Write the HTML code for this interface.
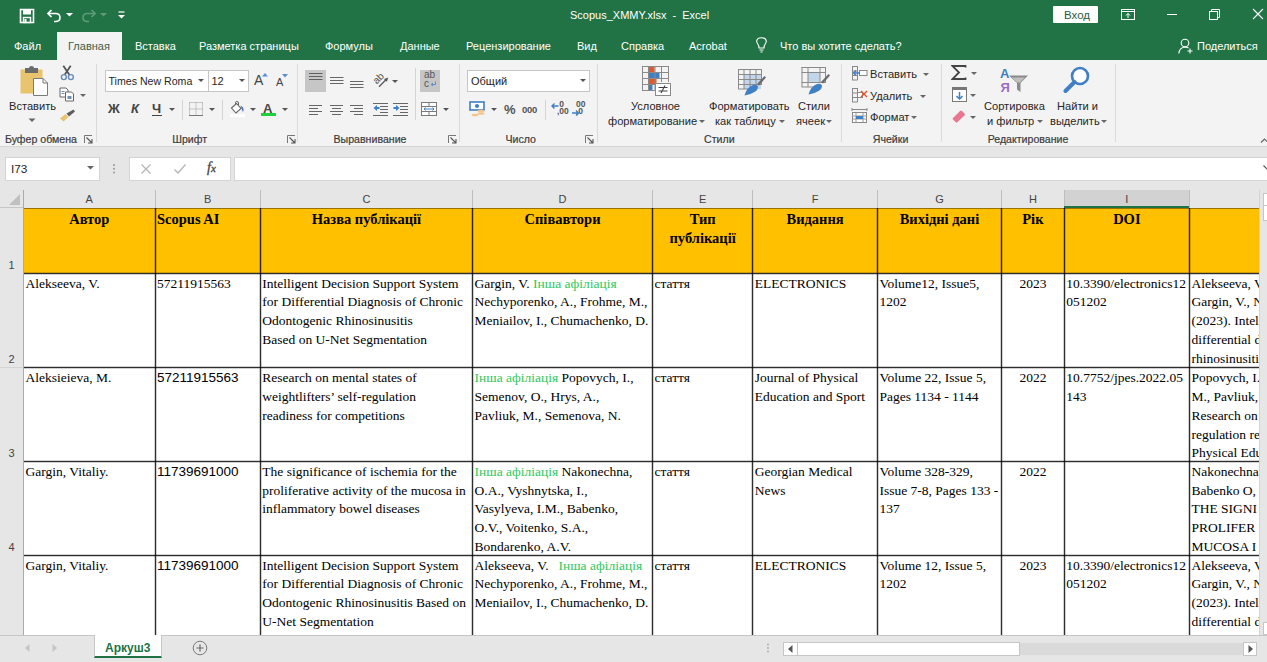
<!DOCTYPE html>
<html><head><meta charset="utf-8">
<style>
*{box-sizing:border-box;margin:0;padding:0}
html,body{width:1267px;height:662px;overflow:hidden;background:#e6e6e6}
body{position:relative;font-family:"Liberation Sans",sans-serif;font-size:11px;color:#444}
.a{position:absolute}
.t{position:absolute;white-space:nowrap}
#top{left:0;top:0;width:1267px;height:60px;background:#217346}
#rib{left:0;top:60px;width:1267px;height:87px;background:#f3f3f3;border-bottom:1px solid #d6d6d6}
.tab{position:absolute;top:39.5px;color:#fff;font-size:11px;white-space:nowrap}
.sep{position:absolute;top:64px;width:1px;height:78px;background:#dadada}
.glabel{position:absolute;top:132.5px;width:120px;text-align:center;font-size:10.6px;color:#3c3c3c;white-space:nowrap;-webkit-text-stroke:0.2px #3c3c3c}
/* grid */
#grid{left:0;top:190px;width:1267px;height:445px;background:#fff;overflow:hidden}
.ch{position:absolute;top:0;height:18px;background:#e6e6e6;font-size:11px;color:#444;text-align:center;line-height:19px}
.rh{position:absolute;left:0;width:23px;background:#e6e6e6;font-size:11px;color:#444;text-align:center}
.cell{position:absolute;font-family:"Liberation Serif",serif;font-size:13.5px;line-height:18.8px;color:#000;white-space:nowrap;overflow:hidden;padding:1.5px 0 0 2px}
.hd{font-weight:bold;font-size:14.5px;line-height:19.7px;text-align:center;padding-left:0}
.g{color:#2fc75e}
.sans{font-family:"Liberation Sans",sans-serif}
.vl{position:absolute;width:3px;background:linear-gradient(to right,rgba(0,0,0,.18) 0 1px,rgba(0,0,0,.82) 1px 2px,rgba(0,0,0,.18) 2px 3px)}
.hl{position:absolute;height:3px;background:linear-gradient(to bottom,rgba(0,0,0,.18) 0 1px,rgba(0,0,0,.82) 1px 2px,rgba(0,0,0,.18) 2px 3px)}
</style></head><body>
<!-- title bar + tabs -->
<div id="top" class="a"></div>
<div class="t" style="left:570px;top:9px;color:#fff;font-size:11px">Scopus_XMMY.xlsx&nbsp; - &nbsp;Excel</div>
<div class="a" style="left:1053px;top:6px;width:45px;height:17px;background:#fff;border-radius:1px"></div>
<div class="t" style="left:1064px;top:8.5px;color:#2a5a40;font-size:11.5px">Вход</div>

<svg class="a" style="left:19px;top:8px" width="16" height="16" viewBox="0 0 16 16"><path d="M1.5 1.5 H14.5 V14.5 H1.5 Z" fill="none" stroke="#fff" stroke-width="1.6"/><rect x="4" y="1.5" width="8" height="5" fill="#fff"/><rect x="4.5" y="9.5" width="7" height="5" fill="none" stroke="#fff" stroke-width="1.4"/><rect x="5.5" y="11" width="2" height="3" fill="#fff"/></svg>
<svg class="a" style="left:47px;top:9px" width="15" height="14" viewBox="0 0 15 14"><path d="M4.5 1 L1 4.5 L4.5 8" fill="none" stroke="#fff" stroke-width="1.6"/><path d="M1.5 4.5 H8.5 Q13 4.5 13 8.5 Q13 12.5 8.5 12.5 H7" fill="none" stroke="#fff" stroke-width="1.6"/></svg>
<svg class="a" style="left:66px;top:13px" width="7" height="4"><path d="M0 0 H7 L3.5 3.5 Z" fill="#fff"/></svg>
<svg class="a" style="left:81px;top:9px" width="15" height="14" viewBox="0 0 15 14"><path d="M10.5 1 L14 4.5 L10.5 8" fill="none" stroke="#5e9c79" stroke-width="1.6"/><path d="M13.5 4.5 H6.5 Q2 4.5 2 8.5 Q2 12.5 6.5 12.5 H8" fill="none" stroke="#5e9c79" stroke-width="1.6"/></svg>
<svg class="a" style="left:100px;top:13px" width="7" height="4"><path d="M0 0 H7 L3.5 3.5 Z" fill="#5e9c79"/></svg>
<svg class="a" style="left:118px;top:11px" width="7" height="9"><path d="M0.5 1 H6.5" stroke="#fff" stroke-width="1.2"/><path d="M0 4 H7 L3.5 7.5 Z" fill="#fff"/></svg>
<svg class="a" style="left:1121px;top:9px" width="14" height="11" viewBox="0 0 14 11"><rect x="0.5" y="0.5" width="13" height="10" fill="none" stroke="#fff"/><path d="M0.5 2.5 H13.5" stroke="#fff"/><path d="M7 9 V4.5 M5 6.5 L7 4.5 L9 6.5" stroke="#fff" fill="none"/></svg>
<div class="a" style="left:1167px;top:14px;width:10px;height:1px;background:#fff"></div>
<svg class="a" style="left:1209px;top:9px" width="12" height="11" viewBox="0 0 12 11"><rect x="0.5" y="2.5" width="8" height="8" fill="none" stroke="#fff"/><path d="M2.5 2.5 V0.5 H10.5 V8.5 H8.5" fill="none" stroke="#fff"/></svg>
<svg class="a" style="left:1252px;top:8px" width="12" height="12" viewBox="0 0 12 12"><path d="M1 1 L11 11 M11 1 L1 11" stroke="#fff" stroke-width="1.1"/></svg>
<svg class="a" style="left:756px;top:37px" width="11" height="16" viewBox="0 0 11 16"><path d="M3 11 Q3 8.5 1.5 6.5 Q0.5 5 0.8 3.5 Q1.5 0.8 5.5 0.8 Q9.5 0.8 10.2 3.5 Q10.5 5 9.5 6.5 Q8 8.5 8 11 Z" fill="none" stroke="#fff" stroke-width="1.1"/><path d="M3.5 13 H7.5 M4.5 15 H6.5" stroke="#fff" stroke-width="1.1"/></svg>
<svg class="a" style="left:1178px;top:38px" width="16" height="16" viewBox="0 0 16 16"><circle cx="7" cy="5" r="3.8" fill="none" stroke="#fff" stroke-width="1.1"/><path d="M0.8 15.5 Q1.5 9.5 7 9 Q9 9 10.5 10" fill="none" stroke="#fff" stroke-width="1.1"/><path d="M12 10.5 V15.5 M9.5 13 H14.5" stroke="#fff" stroke-width="1.1"/></svg>
<div class="a" style="left:57px;top:32px;width:65px;height:28px;background:#f3f3f3"></div>
<div class="tab" style="left:14px">Файл</div>
<div class="tab" style="left:68px;color:#3b5e4a">Главная</div>
<div class="tab" style="left:135px">Вставка</div>
<div class="tab" style="left:199px">Разметка страницы</div>
<div class="tab" style="left:325px">Формулы</div>
<div class="tab" style="left:400px">Данные</div>
<div class="tab" style="left:466px">Рецензирование</div>
<div class="tab" style="left:577px">Вид</div>
<div class="tab" style="left:621px">Справка</div>
<div class="tab" style="left:689px">Acrobat</div>
<div class="tab" style="left:780px">Что вы хотите сделать?</div>
<div class="tab" style="left:1197px">Поделиться</div>

<!-- ribbon -->
<div id="rib" class="a"></div>
<div class="glabel" style="left:-19.1px">Буфер обмена</div>
<div class="glabel" style="left:129.7px">Шрифт</div>
<div class="glabel" style="left:310.0px">Выравнивание</div>
<div class="glabel" style="left:460.7px">Число</div>
<div class="glabel" style="left:659.3px">Стили</div>
<div class="glabel" style="left:830.6px">Ячейки</div>
<div class="glabel" style="left:968.0px">Редактирование</div>
<div class="sep" style="left:96px"></div>
<div class="sep" style="left:297px"></div>
<div class="sep" style="left:459px"></div>
<div class="sep" style="left:597px"></div>
<div class="sep" style="left:841px"></div>
<div class="sep" style="left:941px"></div>
<div class="sep" style="left:1115px"></div>
<!-- clipboard group -->
<svg class="a" style="left:18px;top:65px" width="32" height="32" viewBox="0 0 32 32">
 <rect x="2.5" y="4.5" width="22" height="24" fill="#e8c46f"/>
 <path d="M7 3 H11 Q11 1 13.5 1 Q16 1 16 3 H20 V8 H7 Z" fill="#6b6b6b"/>
 <path d="M15.5 13.5 H25 L29.5 18 V30.5 H15.5 Z" fill="#fff" stroke="#7a7a7a" stroke-width="1"/>
 <path d="M25 13.5 V18 H29.5" fill="none" stroke="#7a7a7a" stroke-width="1"/>
</svg>
<div class="t" style="left:9px;top:100px;font-size:11.1px;color:#262626">Вставить</div>
<svg class="a" style="left:28px;top:118px" width="8" height="5"><path d="M0.5 0.5 H7.5 L4 4 Z" fill="#666"/></svg>
<svg class="a" style="left:59px;top:65px" width="16" height="16" viewBox="0 0 16 16"><path d="M4.3 0.8 L10.5 10 M11.7 0.8 L5.5 10" stroke="#555" stroke-width="1.8" fill="none"/><circle cx="4.9" cy="12.1" r="2.5" fill="none" stroke="#6b8cb5" stroke-width="1.4"/><circle cx="11.9" cy="12.1" r="2.5" fill="none" stroke="#6b8cb5" stroke-width="1.4"/></svg>
<svg class="a" style="left:59px;top:87px" width="16" height="15" viewBox="0 0 16 15">
 <path d="M1 1 H7 L9 3 V10 H1 Z" fill="#fff" stroke="#666" stroke-width="1"/>
 <path d="M6.5 5 H12.5 L14.5 7 V14 H6.5 Z" fill="#fff" stroke="#666" stroke-width="1"/>
 <rect x="2.5" y="4" width="3" height="1" fill="#6f8fb8"/><rect x="2.5" y="6" width="3" height="1" fill="#6f8fb8"/><rect x="8.5" y="9" width="4" height="3" fill="#6f8fb8"/>
</svg>
<svg class="a" style="left:80px;top:94px" width="6" height="4"><path d="M0 0 H6 L3 3 Z" fill="#666"/></svg>
<svg class="a" style="left:59px;top:109px" width="17" height="13" viewBox="0 0 17 13"><path d="M1 9.5 L6.5 5 L9.5 8 L4.5 12.5 Z" fill="#e8c46f"/><path d="M7.5 4.5 L14.5 0.5 L16 2.5 L10 7.5 Z" fill="#5f5f5f"/></svg>
<svg class="a" style="left:84px;top:135px" width="9" height="9" viewBox="0 0 9 9"><path d="M0.5 8 V0.5 H8" fill="none" stroke="#777" stroke-width="1"/><path d="M2.5 2.5 L7.5 7.5 M8 4 V8 H4" stroke="#555" fill="none" stroke-width="1.1"/></svg>
<!-- alignment group -->
<div class="a" style="left:305px;top:70px;width:21px;height:22px;background:#c6c6c6"></div>
<svg class="a" style="left:309px;top:72px" width="14" height="9"><path d="M0 1.5H13.5M0 4.5H13.5M0 7.5H13.5" stroke="#5f5f5f" stroke-width="1"/></svg>
<svg class="a" style="left:330px;top:76px" width="14" height="9"><path d="M0 1.5H13.5M0 4.5H13.5M0 7.5H13.5" stroke="#666" stroke-width="1"/></svg>
<svg class="a" style="left:350px;top:80px" width="14" height="9"><path d="M0 1.5H13.5M0 4.5H13.5M0 7.5H13.5" stroke="#666" stroke-width="1"/></svg>
<svg class="a" style="left:372px;top:71px" width="22" height="18" viewBox="0 0 22 18"><text x="0" y="0" transform="translate(4.8 13.6) rotate(-45)" font-family="Liberation Sans" font-size="10" fill="#505050">ab</text><path d="M7 15.8 L14 8.8" stroke="#555" stroke-width="1.3" fill="none"/><path d="M16.3 6.5 L12 8 L14.8 10.8 Z" fill="#555"/></svg>
<svg class="a" style="left:392px;top:80px" width="6" height="4"><path d="M0 0 H6 L3 3 Z" fill="#555"/></svg>
<svg class="a" style="left:309px;top:104px" width="14" height="11"><path d="M0 1.5H13M0 4.5H9M0 7.5H13M0 10.5H9" stroke="#666" stroke-width="1"/></svg>
<svg class="a" style="left:330px;top:104px" width="14" height="11"><path d="M0 1.5H13M2 4.5H11M0 7.5H13M2 10.5H11" stroke="#666" stroke-width="1"/></svg>
<svg class="a" style="left:350px;top:104px" width="14" height="11"><path d="M0 1.5H13M4 4.5H13M0 7.5H13M4 10.5H13" stroke="#666" stroke-width="1"/></svg>
<svg class="a" style="left:373px;top:102px" width="16" height="14"><path d="M0 1.5H15M7 4.5H15M7 7.5H15M7 10.5H15M0 13.5H15" stroke="#666" stroke-width="1"/><path d="M0.5 6 L4 3 V5 H6.5 V7 H4 V9 Z" fill="#3f7fc6"/></svg>
<svg class="a" style="left:393px;top:102px" width="16" height="14"><path d="M0 1.5H15M7 4.5H15M7 7.5H15M7 10.5H15M0 13.5H15" stroke="#666" stroke-width="1"/><path d="M6.5 6 L3 3 V5 H0.5 V7 H3 V9 Z" fill="#3f7fc6"/></svg>
<div class="a" style="left:415px;top:68px;width:1px;height:52px;background:#d4d4d4"></div>
<div class="a" style="left:420px;top:70px;width:20px;height:22px;background:#c6c6c6"></div>
<div class="t" style="left:424px;top:70px;font-size:10px;line-height:9px;color:#555">ab<br>c</div>
<svg class="a" style="left:430px;top:81px" width="7" height="6"><path d="M5.5 0.5 V3.5 H1.5 M3 2 L1 3.5 L3 5" stroke="#5b8fd0" fill="none" stroke-width="1"/></svg>
<svg class="a" style="left:421px;top:102px" width="16" height="14" viewBox="0 0 16 14"><rect x="0.5" y="0.5" width="15" height="13" fill="#fff" stroke="#7a7a7a"/><path d="M0.5 4.5H15.5M0.5 9.5H15.5M8 0.5V4.5M8 9.5V13.5" stroke="#7a7a7a" fill="none"/><path d="M3 7H13M4.5 5.5L3 7L4.5 8.5M11.5 5.5L13 7L11.5 8.5" stroke="#3f7fc6" fill="none"/></svg>
<svg class="a" style="left:443px;top:108px" width="6" height="4"><path d="M0 0 H6 L3 3 Z" fill="#555"/></svg>
<svg class="a" style="left:448px;top:135px" width="9" height="9" viewBox="0 0 9 9"><path d="M0.5 8 V0.5 H8" fill="none" stroke="#777" stroke-width="1"/><path d="M2.5 2.5 L7.5 7.5 M8 4 V8 H4" stroke="#555" fill="none" stroke-width="1.1"/></svg>
<!-- number group -->
<div class="a" style="left:467px;top:70px;width:123px;height:22px;background:#fff;border:1px solid #c6c6c6"></div>
<div class="t" style="left:471px;top:75px;font-size:11px;color:#262626">Общий</div>
<svg class="a" style="left:580px;top:79px" width="6" height="4"><path d="M0 0 H6 L3 3 Z" fill="#555"/></svg>
<svg class="a" style="left:469px;top:101px" width="17" height="16" viewBox="0 0 17 16"><rect x="1" y="1" width="14" height="8" fill="#fff" stroke="#3f7fc6" stroke-width="1.6"/><circle cx="8" cy="5" r="2" fill="#3f7fc6"/><ellipse cx="12" cy="10" rx="3.5" ry="1.3" fill="#f3c58a"/><ellipse cx="12" cy="12.5" rx="3.5" ry="1.3" fill="#f3c58a"/><ellipse cx="6" cy="14" rx="3.5" ry="1.3" fill="#f3c58a"/></svg>
<svg class="a" style="left:491px;top:108px" width="6" height="4"><path d="M0 0 H6 L3 3 Z" fill="#555"/></svg>
<div class="t" style="left:504px;top:102px;font-size:13px;font-weight:bold;color:#555">%</div>
<div class="t" style="left:522px;top:104px;font-size:9.5px;font-weight:bold;color:#555;letter-spacing:-0.3px">000</div>
<div class="a" style="left:545px;top:100px;width:1px;height:20px;background:#d4d4d4"></div>
<div class="t" style="left:557px;top:101px;font-size:8.5px;line-height:7px;color:#555;font-weight:bold">&nbsp;0<br>,00</div>
<svg class="a" style="left:551px;top:103px" width="8" height="6"><path d="M7.5 3 H1 M3.5 0.5 L1 3 L3.5 5.5" stroke="#3f7fc6" stroke-width="1.4" fill="none"/></svg>
<div class="t" style="left:576px;top:101px;font-size:8.5px;line-height:7px;color:#555;font-weight:bold">00<br>,0</div>
<svg class="a" style="left:572px;top:110px" width="8" height="6"><path d="M0 3 H6.5 M4 0.5 L6.5 3 L4 5.5" stroke="#3f7fc6" stroke-width="1.4" fill="none"/></svg>
<svg class="a" style="left:585px;top:135px" width="9" height="9" viewBox="0 0 9 9"><path d="M0.5 8 V0.5 H8" fill="none" stroke="#777" stroke-width="1"/><path d="M2.5 2.5 L7.5 7.5 M8 4 V8 H4" stroke="#555" fill="none" stroke-width="1.1"/></svg>
<!-- styles group -->
<svg class="a" style="left:641px;top:66px" width="32" height="31" viewBox="0 0 32 31">
 <rect x="7.5" y="1" width="6" height="5" fill="#e25a2b"/><rect x="7.5" y="7" width="11" height="5" fill="#3f7fc6"/><rect x="7.5" y="13" width="8" height="5" fill="#e25a2b"/><rect x="7.5" y="19" width="4" height="5" fill="#3f7fc6"/>
 <path d="M1.5 0.5 V24.5 M7.5 0.5 V24.5 M14 0.5 V24.5 M20.5 0.5 V16 M27.5 0.5 V16 M1 0.5 H28 M1 6.5 H28 M1 12.5 H28 M1 18.5 H14 M1 24.5 H14" stroke="#8a8a8a" stroke-width="1" fill="none"/>
 <rect x="14.5" y="17.5" width="15" height="12" fill="#fff" stroke="#8a8a8a"/>
 <path d="M17.5 21.5 H26.5 M17.5 25 H26.5 M24 19.5 L20 27" stroke="#444" stroke-width="1.1"/>
</svg>
<div class="t" style="left:631px;top:100px;font-size:11.1px;color:#262626">Условное</div>
<div class="t" style="left:608px;top:115px;font-size:11.1px;color:#262626">форматирование</div>
<svg class="a" style="left:699px;top:120px" width="6" height="4"><path d="M0 0 H6 L3 3 Z" fill="#666"/></svg>
<svg class="a" style="left:737px;top:68px" width="30" height="29" viewBox="0 0 30 29">
 <rect x="7" y="6" width="17" height="15" fill="#c3d5ea"/>
 <path d="M1.5 1 V21 M7 1 V21 M13 1 V21 M19 1 V21 M24.5 1 V16 M1 1.5 H25 M1 6.5 H25 M1 11.5 H25 M1 16.5 H25 M1 21 H15" stroke="#8a8a8a" stroke-width="1" fill="none"/>
 <path d="M20 16 L27.5 8 L29 9.5 L22 17.5 Z" fill="#6b6b6b"/>
 <path d="M7.5 27.5 Q10 19 16 17 Q20 16 21 18.5 Q21 22 17.5 24 Q13 27 7.5 27.5 Z" fill="#3f7fc6"/>
</svg>
<div class="t" style="left:709px;top:100px;font-size:11.1px;color:#262626">Форматировать</div>
<div class="t" style="left:715px;top:115px;font-size:11.1px;color:#262626">как таблицу</div>
<svg class="a" style="left:779px;top:120px" width="6" height="4"><path d="M0 0 H6 L3 3 Z" fill="#666"/></svg>
<svg class="a" style="left:801px;top:66px" width="30" height="30" viewBox="0 0 30 30">
 <rect x="7" y="6.5" width="12" height="10" fill="#c3d5ea"/>
 <path d="M1 1 V21 M7 1 V21 M19 1 V16 M24.5 1 V16 M0.5 1.5 H25 M0.5 6.5 H25 M0.5 16.5 H25 M0.5 21 H14" stroke="#8a8a8a" stroke-width="1" fill="none"/>
 <path d="M20 16 L27.5 8 L29 9.5 L22 17.5 Z" fill="#6b6b6b"/>
 <path d="M7.5 28.5 Q10 20 16 18 Q20 17 21 19.5 Q21 23 17.5 25 Q13 28 7.5 28.5 Z" fill="#3f7fc6"/>
</svg>
<div class="t" style="left:798px;top:100px;font-size:11.1px;color:#262626">Стили</div>
<div class="t" style="left:796px;top:115px;font-size:11.1px;color:#262626">ячеек</div>
<svg class="a" style="left:826px;top:120px" width="6" height="4"><path d="M0 0 H6 L3 3 Z" fill="#666"/></svg>
<!-- cells group -->
<svg class="a" style="left:851px;top:65px" width="17" height="16" viewBox="0 0 17 16"><path d="M1.5 1 V15 M6.5 1 V15 M1 1.5 H6.5 M1 6 H6.5 M1 10.5 H6.5 M1 15 H6.5" stroke="#888" fill="none"/><rect x="8.5" y="5.5" width="7.5" height="5" fill="#fff" stroke="#888"/><path d="M2.5 8 H9 M5 5.5 L2.5 8 L5 10.5" stroke="#3f7fc6" stroke-width="1.4" fill="none"/></svg>
<div class="t" style="left:870px;top:68px;font-size:11.1px;color:#262626">Вставить</div>
<svg class="a" style="left:923px;top:73px" width="6" height="4"><path d="M0 0 H6 L3 3 Z" fill="#666"/></svg>
<svg class="a" style="left:851px;top:87px" width="17" height="16" viewBox="0 0 17 16"><path d="M1.5 1 V15 M6.5 1 V15 M1 1.5 H6.5 M1 6 H6.5 M1 10.5 H6.5 M1 15 H6.5" stroke="#888" fill="none"/><rect x="6.5" y="5.5" width="5" height="5" fill="#fff" stroke="#888"/><path d="M10 4 L16 10 M16 4 L10 10" stroke="#e0522a" stroke-width="1.4"/></svg>
<div class="t" style="left:870px;top:90px;font-size:11.1px;color:#262626">Удалить</div>
<svg class="a" style="left:920px;top:95px" width="6" height="4"><path d="M0 0 H6 L3 3 Z" fill="#666"/></svg>
<svg class="a" style="left:851px;top:108px" width="17" height="16" viewBox="0 0 17 16"><path d="M1 1.5 H16 M1 0 V3 M16 0 V3" stroke="#888" fill="none"/><rect x="1.5" y="4.5" width="14" height="10" fill="#fff" stroke="#888"/><path d="M1.5 8 H15.5 M1.5 11 H15.5 M5 4.5 V14.5 M12 4.5 V14.5" stroke="#999" fill="none"/><rect x="5" y="8" width="7" height="3" fill="#3f7fc6"/></svg>
<div class="t" style="left:870px;top:111px;font-size:11.1px;color:#262626">Формат</div>
<svg class="a" style="left:911px;top:116px" width="6" height="4"><path d="M0 0 H6 L3 3 Z" fill="#666"/></svg>
<!-- editing group -->
<svg class="a" style="left:951px;top:65px" width="16" height="15" viewBox="0 0 16 15"><path d="M14.5 2.5 V1 H1.5 L8 7.5 L1.5 14 H14.5 V12.5" stroke="#444" stroke-width="1.8" fill="none"/></svg>
<svg class="a" style="left:971px;top:72px" width="6" height="4"><path d="M0 0 H6 L3 3 Z" fill="#666"/></svg>
<svg class="a" style="left:952px;top:87px" width="15" height="15" viewBox="0 0 15 15"><rect x="0.5" y="0.5" width="14" height="14" fill="#fff" stroke="#777"/><rect x="0.5" y="0.5" width="14" height="2.5" fill="#777"/><path d="M7.5 5 V12 M4.5 9 L7.5 12 L10.5 9" stroke="#3f7fc6" stroke-width="1.5" fill="none"/></svg>
<svg class="a" style="left:970px;top:94px" width="6" height="4"><path d="M0 0 H6 L3 3 Z" fill="#666"/></svg>
<svg class="a" style="left:952px;top:109px" width="14" height="14" viewBox="0 0 14 14"><path d="M1 9 L8 2 Q9 1 10 2 L12.5 4.5 Q13.5 5.5 12.5 6.5 L5.5 13 Q4.5 14 3.5 13 L1 10.5 Q0 9.5 1 9 Z" fill="#e8788e"/></svg>
<svg class="a" style="left:970px;top:116px" width="6" height="4"><path d="M0 0 H6 L3 3 Z" fill="#666"/></svg>
<svg class="a" style="left:998px;top:66px" width="32" height="28" viewBox="0 0 32 28">
 <text x="2" y="12" font-family="Liberation Sans" font-weight="bold" font-size="13" fill="#3f7fc6">A</text>
 <text x="2.5" y="26" font-family="Liberation Sans" font-weight="bold" font-size="13" fill="#9b6bbf">Я</text>
 <path d="M11 9.5 H30 L22.5 17 V26 L19 23.5 V17 Z" fill="#8a8a8a"/>
 <path d="M14 11.5 H27 L22 16.5 H19 Z" fill="#f3f3f3" opacity="0.5"/>
</svg>
<div class="t" style="left:984px;top:100px;font-size:11.1px;color:#262626">Сортировка</div>
<div class="t" style="left:987px;top:115px;font-size:11.1px;color:#262626">и фильтр</div>
<svg class="a" style="left:1037px;top:120px" width="6" height="4"><path d="M0 0 H6 L3 3 Z" fill="#666"/></svg>
<svg class="a" style="left:1063px;top:66px" width="28" height="27" viewBox="0 0 28 27"><circle cx="17" cy="10" r="8" fill="#fff" stroke="#3f7fc6" stroke-width="2.6"/><path d="M11.5 16 L2.5 25" stroke="#3f7fc6" stroke-width="4" stroke-linecap="round"/></svg>
<div class="t" style="left:1057px;top:100px;font-size:11.1px;color:#262626">Найти и</div>
<div class="t" style="left:1050px;top:115px;font-size:11.1px;color:#262626">выделить</div>
<svg class="a" style="left:1101px;top:120px" width="6" height="4"><path d="M0 0 H6 L3 3 Z" fill="#666"/></svg>
<svg class="a" style="left:1260px;top:135px" width="9" height="9"><path d="M1 7.5 L4.5 4 L8 7.5" stroke="#666" fill="none" stroke-width="1.2"/></svg>
<!-- font group -->
<div class="a" style="left:105px;top:70px;width:104px;height:22px;background:#fff;border:1px solid #c6c6c6"></div>
<div class="t" style="left:108.5px;top:75px;font-size:10.6px;color:#262626">Times New Roma</div>
<svg class="a" style="left:198px;top:79px" width="6" height="4"><path d="M0 0 H6 L3 3 Z" fill="#555"/></svg>
<div class="a" style="left:208px;top:70px;width:41px;height:22px;background:#fff;border:1px solid #c6c6c6"></div>
<div class="t" style="left:211.5px;top:75px;font-size:11px;color:#262626">12</div>
<svg class="a" style="left:239px;top:79px" width="6" height="4"><path d="M0 0 H6 L3 3 Z" fill="#555"/></svg>
<div class="t" style="left:254px;top:72px;font-size:14px;color:#444">A</div>
<svg class="a" style="left:262px;top:73px" width="6" height="4"><path d="M0 3.5 H6 L3 0 Z" fill="#5b8fd0"/></svg>
<div class="t" style="left:276px;top:76px;font-size:11px;color:#444">A</div>
<svg class="a" style="left:282px;top:74px" width="6" height="4"><path d="M0 0 H6 L3 3.5 Z" fill="#5b8fd0"/></svg>
<div class="t" style="left:108px;top:101px;font-size:13px;font-weight:bold;color:#444">Ж</div>
<div class="t" style="left:131px;top:101px;font-size:13px;font-weight:bold;font-style:italic;color:#444">К</div>
<div class="t" style="left:152px;top:101px;font-size:13px;font-weight:bold;color:#444">Ч</div>
<div class="a" style="left:152px;top:115px;width:10px;height:1px;background:#444"></div>
<svg class="a" style="left:169px;top:108px" width="6" height="4"><path d="M0 0 H6 L3 3 Z" fill="#555"/></svg>
<div class="a" style="left:182px;top:100px;width:1px;height:20px;background:#d4d4d4"></div>
<svg class="a" style="left:189px;top:102px" width="14" height="14" viewBox="0 0 14 14"><path d="M0.5 0.5 H13.5 M0.5 7 H13.5 M0.5 0.5 V13.5 M13.5 0.5 V13.5 M7 0.5 V13.5" stroke="#9a9a9a" stroke-dasharray="1 1" fill="none"/><path d="M0 13.5 H14" stroke="#777"/></svg>
<svg class="a" style="left:209px;top:108px" width="6" height="4"><path d="M0 0 H6 L3 3 Z" fill="#555"/></svg>
<div class="a" style="left:222px;top:100px;width:1px;height:20px;background:#d4d4d4"></div>
<svg class="a" style="left:230px;top:101px" width="16" height="16" viewBox="0 0 16 16"><path d="M5.5 6 V1.5 Q5.5 0.5 7 0.5 Q8.5 0.5 8.5 2 V4" stroke="#666" stroke-width="1" fill="none"/><path d="M1.5 7 L6.5 2.5 L11 7.5 L6 12 Z" fill="#fff" stroke="#666" stroke-width="1.1"/><path d="M10.5 4.5 Q14 6 13.5 9.5 L12.8 11 L11.5 7.5 Z" fill="#4a74b8"/><rect x="0" y="13" width="15" height="3" fill="#fff"/></svg>
<svg class="a" style="left:250px;top:108px" width="6" height="4"><path d="M0 0 H6 L3 3 Z" fill="#555"/></svg>
<div class="t" style="left:263px;top:101px;font-size:13px;font-weight:bold;color:#4a4a4a">A</div>
<div class="a" style="left:261px;top:113px;width:15px;height:3px;background:#1ed13c"></div>
<svg class="a" style="left:282px;top:108px" width="6" height="4"><path d="M0 0 H6 L3 3 Z" fill="#555"/></svg>
<svg class="a" style="left:287px;top:135px" width="9" height="9" viewBox="0 0 9 9"><path d="M0.5 8 V0.5 H8" fill="none" stroke="#777" stroke-width="1"/><path d="M2.5 2.5 L7.5 7.5 M8 4 V8 H4" stroke="#555" fill="none" stroke-width="1.1"/></svg>

<!-- formula bar -->
<div class="a" style="left:5px;top:157px;width:95px;height:24px;background:#fff;border:1px solid #d4d4d4"></div>
<div class="t" style="left:11px;top:162px;font-size:11.8px;color:#262626">I73</div>
<div class="a" style="left:129px;top:157px;width:102px;height:24px;background:#fff;border:1px solid #d4d4d4"></div>
<div class="a" style="left:234px;top:157px;width:1040px;height:24px;background:#fff;border:1px solid #d4d4d4"></div>
<svg class="a" style="left:87px;top:166px" width="7" height="4"><path d="M0 0 H7 L3.5 3.5 Z" fill="#666"/></svg>
<svg class="a" style="left:112px;top:163px" width="4" height="12"><circle cx="2" cy="2" r="1" fill="#999"/><circle cx="2" cy="5.8" r="1" fill="#999"/><circle cx="2" cy="9.5" r="1" fill="#999"/></svg>
<svg class="a" style="left:141px;top:164px" width="10" height="10"><path d="M0.5 0.5 L9.5 9.5 M9.5 0.5 L0.5 9.5" stroke="#b4b4b4" stroke-width="1.1"/></svg>
<svg class="a" style="left:174px;top:164px" width="12" height="10"><path d="M0.5 5.5 L4 9 L11.5 0.5" stroke="#b4b4b4" stroke-width="1.3" fill="none"/></svg>
<div class="t" style="left:207px;top:160px;font-family:'Liberation Serif',serif;font-style:italic;font-size:14px;color:#444;-webkit-text-stroke:0.3px #444">f<span style="font-size:11px">x</span></div>
<svg class="a" style="left:1263px;top:165px" width="8" height="6"><path d="M0.5 0.5 L4 4 L7.5 0.5" stroke="#555" stroke-width="1.2" fill="none"/></svg>

<!-- grid -->
<div id="grid" class="a"></div>
<div class="a" style="left:23.5px;top:208px;width:1235.8px;height:65px;background:#ffc000"></div>
<div class="ch" style="left:23.5px;width:131.5px;top:190px;height:18px;background:#e6e6e6">A</div>
<div class="ch" style="left:155px;width:105.3px;top:190px;height:18px;background:#e6e6e6">B</div>
<div class="a" style="left:154.5px;top:190px;width:1px;height:18px;background:#bdbdbd"></div>
<div class="ch" style="left:260.3px;width:212.3px;top:190px;height:18px;background:#e6e6e6">C</div>
<div class="a" style="left:259.8px;top:190px;width:1px;height:18px;background:#bdbdbd"></div>
<div class="ch" style="left:472.6px;width:179.9px;top:190px;height:18px;background:#e6e6e6">D</div>
<div class="a" style="left:472.1px;top:190px;width:1px;height:18px;background:#bdbdbd"></div>
<div class="ch" style="left:652.5px;width:100.3px;top:190px;height:18px;background:#e6e6e6">E</div>
<div class="a" style="left:652px;top:190px;width:1px;height:18px;background:#bdbdbd"></div>
<div class="ch" style="left:752.8px;width:124.6px;top:190px;height:18px;background:#e6e6e6">F</div>
<div class="a" style="left:752.3px;top:190px;width:1px;height:18px;background:#bdbdbd"></div>
<div class="ch" style="left:877.4px;width:124.1px;top:190px;height:18px;background:#e6e6e6">G</div>
<div class="a" style="left:876.9px;top:190px;width:1px;height:18px;background:#bdbdbd"></div>
<div class="ch" style="left:1001.5px;width:62.8px;top:190px;height:18px;background:#e6e6e6">H</div>
<div class="a" style="left:1001px;top:190px;width:1px;height:18px;background:#bdbdbd"></div>
<div class="ch" style="left:1064.3px;width:125.1px;top:190px;height:18px;background:#d2d2d2">I</div>
<div class="a" style="left:1063.8px;top:190px;width:1px;height:18px;background:#bdbdbd"></div>
<div class="ch" style="left:1189.4px;width:69.9px;top:190px;height:18px;background:#e6e6e6"></div>
<div class="a" style="left:1188.9px;top:190px;width:1px;height:18px;background:#bdbdbd"></div>
<div class="a" style="left:23.5px;top:208px;width:1235.8px;height:1px;background:rgba(0,0,0,.4)"></div>
<div class="a" style="left:1064.3px;top:206px;width:125.1px;height:2px;background:#217346"></div>
<div class="a" style="left:1259.3px;top:190px;width:7.7000000000000455px;height:445px;background:#e6e6e6"></div>
<div class="a" style="left:0;top:190px;width:23.5px;height:18px;background:#e6e6e6"></div>
<svg class="a" style="left:9px;top:194px" width="12" height="12"><path d="M11 0 L11 11 L0 11 Z" fill="#c0c0c0"/></svg>
<div class="a" style="left:23px;top:190px;width:1px;height:445px;background:#ababab"></div>
<div class="a" style="left:0;top:207px;width:23px;height:1px;background:#c6c6c6"></div>
<div class="rh" style="top:208px;height:65px"></div>
<div class="t" style="left:0;width:23px;text-align:center;top:258.5px;font-size:11px;color:#444">1</div>
<div class="a" style="left:0;top:272.5px;width:23px;height:1px;background:#d4d4d4"></div>
<div class="rh" style="top:273px;height:94.7px"></div>
<div class="t" style="left:0;width:23px;text-align:center;top:353.2px;font-size:11px;color:#444">2</div>
<div class="a" style="left:0;top:367.2px;width:23px;height:1px;background:#d4d4d4"></div>
<div class="rh" style="top:367.7px;height:93.6px"></div>
<div class="t" style="left:0;width:23px;text-align:center;top:446.8px;font-size:11px;color:#444">3</div>
<div class="a" style="left:0;top:460.8px;width:23px;height:1px;background:#d4d4d4"></div>
<div class="rh" style="top:461.3px;height:93.7px"></div>
<div class="t" style="left:0;width:23px;text-align:center;top:540.5px;font-size:11px;color:#444">4</div>
<div class="a" style="left:0;top:554.5px;width:23px;height:1px;background:#d4d4d4"></div>
<div class="rh" style="top:555px;height:80px"></div>
<div class="cell hd" style="left:23.5px;top:208px;width:131.5px;height:65px;text-align:center;padding-left:0;">Автор</div>
<div class="cell hd" style="left:155px;top:208px;width:105.3px;height:65px;text-align:left;padding-left:2px;">Scopus AI</div>
<div class="cell hd" style="left:260.3px;top:208px;width:212.3px;height:65px;text-align:center;padding-left:0;">Назва публікації</div>
<div class="cell hd" style="left:472.6px;top:208px;width:179.9px;height:65px;text-align:center;padding-left:0;">Співавтори</div>
<div class="cell hd" style="left:652.5px;top:208px;width:100.3px;height:65px;text-align:center;padding-left:0;">Тип<br>публікації</div>
<div class="cell hd" style="left:752.8px;top:208px;width:124.6px;height:65px;text-align:center;padding-left:0;">Видання</div>
<div class="cell hd" style="left:877.4px;top:208px;width:124.1px;height:65px;text-align:center;padding-left:0;">Вихідні дані</div>
<div class="cell hd" style="left:1001.5px;top:208px;width:62.8px;height:65px;text-align:center;padding-left:0;">Рік</div>
<div class="cell hd" style="left:1064.3px;top:208px;width:125.1px;height:65px;text-align:center;padding-left:0;">DOI</div>
<div class="cell" style="left:23.5px;top:273px;width:131.5px;height:94.7px;">Alekseeva, V.</div>
<div class="cell" style="left:155px;top:273px;width:105.3px;height:94.7px;">57211915563</div>
<div class="cell" style="left:260.3px;top:273px;width:212.3px;height:94.7px;">Intelligent Decision Support System<br>for Differential Diagnosis of Chronic<br>Odontogenic Rhinosinusitis<br>Based on U-Net Segmentation</div>
<div class="cell" style="left:472.6px;top:273px;width:179.9px;height:94.7px;">Gargin, V. <span class="g">Інша афіліація</span><br>Nechyporenko, A., Frohme, M.,<br>Meniailov, I., Chumachenko, D.</div>
<div class="cell" style="left:652.5px;top:273px;width:100.3px;height:94.7px;">стаття</div>
<div class="cell" style="left:752.8px;top:273px;width:124.6px;height:94.7px;">ELECTRONICS</div>
<div class="cell" style="left:877.4px;top:273px;width:124.1px;height:94.7px;">Volume12, Issue5,<br>1202</div>
<div class="cell" style="left:1001.5px;top:273px;width:62.8px;height:94.7px;text-align:center;padding-left:0;">2023</div>
<div class="cell" style="left:1064.3px;top:273px;width:125.1px;height:94.7px;">10.3390/electronics12<br>051202</div>
<div class="cell" style="left:1189.4px;top:273px;width:69.9px;height:94.7px;">Alekseeva, V.<br>Gargin, V., N<br>(2023). Intel<br>differential d<br>rhinosinusitis</div>
<div class="cell" style="left:23.5px;top:367.7px;width:131.5px;height:93.6px;">Aleksieieva, M.</div>
<div class="cell" style="left:155px;top:367.7px;width:105.3px;height:93.6px;"><span class="sans">57211915563</span></div>
<div class="cell" style="left:260.3px;top:367.7px;width:212.3px;height:93.6px;">Research on mental states of<br>weightlifters’ self-regulation<br>readiness for competitions</div>
<div class="cell" style="left:472.6px;top:367.7px;width:179.9px;height:93.6px;"><span class="g">Інша афіліація</span> Popovych, I.,<br>Semenov, O., Hrys, A.,<br>Pavliuk, M., Semenova, N.</div>
<div class="cell" style="left:652.5px;top:367.7px;width:100.3px;height:93.6px;">стаття</div>
<div class="cell" style="left:752.8px;top:367.7px;width:124.6px;height:93.6px;">Journal of Physical<br>Education and Sport</div>
<div class="cell" style="left:877.4px;top:367.7px;width:124.1px;height:93.6px;">Volume 22, Issue 5,<br>Pages 1134 - 1144</div>
<div class="cell" style="left:1001.5px;top:367.7px;width:62.8px;height:93.6px;text-align:center;padding-left:0;">2022</div>
<div class="cell" style="left:1064.3px;top:367.7px;width:125.1px;height:93.6px;">10.7752/jpes.2022.05<br>143</div>
<div class="cell" style="left:1189.4px;top:367.7px;width:69.9px;height:93.6px;">Popovych, I.<br>M., Pavliuk,<br>Research on<br>regulation re<br>Physical Edu</div>
<div class="cell" style="left:23.5px;top:461.3px;width:131.5px;height:93.7px;">Gargin, Vitaliy.</div>
<div class="cell" style="left:155px;top:461.3px;width:105.3px;height:93.7px;"><span class="sans">11739691000</span></div>
<div class="cell" style="left:260.3px;top:461.3px;width:212.3px;height:93.7px;">The significance of ischemia for the<br>proliferative activity of the mucosa in<br>inflammatory bowel diseases</div>
<div class="cell" style="left:472.6px;top:461.3px;width:179.9px;height:93.7px;"><span class="g">Інша афіліація</span> Nakonechna,<br>O.A., Vyshnytska, I.,<br>Vasylyeva, I.M., Babenko,<br>O.V., Voitenko, S.A.,<br>Bondarenko, A.V.</div>
<div class="cell" style="left:652.5px;top:461.3px;width:100.3px;height:93.7px;">стаття</div>
<div class="cell" style="left:752.8px;top:461.3px;width:124.6px;height:93.7px;">Georgian Medical<br>News</div>
<div class="cell" style="left:877.4px;top:461.3px;width:124.1px;height:93.7px;">Volume 328-329,<br>Issue 7-8, Pages 133 -<br>137</div>
<div class="cell" style="left:1001.5px;top:461.3px;width:62.8px;height:93.7px;text-align:center;padding-left:0;">2022</div>
<div class="cell" style="left:1189.4px;top:461.3px;width:69.9px;height:93.7px;">Nakonechna<br>Babenko O,<br>THE SIGNI<br>PROLIFER<br>MUCOSA I</div>
<div class="cell" style="left:23.5px;top:555px;width:131.5px;height:80px;">Gargin, Vitaliy.</div>
<div class="cell" style="left:155px;top:555px;width:105.3px;height:80px;"><span class="sans">11739691000</span></div>
<div class="cell" style="left:260.3px;top:555px;width:212.3px;height:80px;">Intelligent Decision Support System<br>for Differential Diagnosis of Chronic<br>Odontogenic Rhinosinusitis Based on<br>U-Net Segmentation</div>
<div class="cell" style="left:472.6px;top:555px;width:179.9px;height:80px;">Alekseeva, V. &nbsp;<span class="g" style="margin-left:3px">Інша афіліація</span><br>Nechyporenko, A., Frohme, M.,<br>Meniailov, I., Chumachenko, D.</div>
<div class="cell" style="left:652.5px;top:555px;width:100.3px;height:80px;">стаття</div>
<div class="cell" style="left:752.8px;top:555px;width:124.6px;height:80px;">ELECTRONICS</div>
<div class="cell" style="left:877.4px;top:555px;width:124.1px;height:80px;">Volume 12, Issue 5,<br>1202</div>
<div class="cell" style="left:1001.5px;top:555px;width:62.8px;height:80px;text-align:center;padding-left:0;">2023</div>
<div class="cell" style="left:1064.3px;top:555px;width:125.1px;height:80px;">10.3390/electronics12<br>051202</div>
<div class="cell" style="left:1189.4px;top:555px;width:69.9px;height:80px;">Alekseeva, V<br>Gargin, V., N<br>(2023). Intel<br>differential d<br>rhinosinusitis</div>
<div class="vl" style="left:154px;top:208px;height:427px"></div>
<div class="vl" style="left:259px;top:208px;height:427px"></div>
<div class="vl" style="left:471px;top:208px;height:427px"></div>
<div class="vl" style="left:651px;top:208px;height:427px"></div>
<div class="vl" style="left:751px;top:208px;height:427px"></div>
<div class="vl" style="left:876px;top:208px;height:427px"></div>
<div class="vl" style="left:1000px;top:208px;height:427px"></div>
<div class="vl" style="left:1063px;top:208px;height:427px"></div>
<div class="vl" style="left:1188px;top:208px;height:427px"></div>
<div class="hl" style="left:23.5px;top:272px;width:1235.8px"></div>
<div class="hl" style="left:23.5px;top:366px;width:1235.8px"></div>
<div class="hl" style="left:23.5px;top:460px;width:1235.8px"></div>
<div class="hl" style="left:23.5px;top:554px;width:1235.8px"></div>

<!-- sheet tabs -->
<div class="a" style="left:0;top:635px;width:1267px;height:27px;background:#e6e6e6;border-top:1px solid #c6c6c6"></div>
<div class="a" style="left:94px;top:635px;width:68px;height:23px;background:#fff;border-left:1px solid #c6c6c6;border-right:1px solid #c6c6c6;border-bottom:2px solid #217346"></div>
<div class="t" style="left:105px;top:641px;font-size:12px;font-weight:bold;color:#217346">Аркуш3</div>
<svg class="a" style="left:25px;top:644px" width="5" height="8"><path d="M4.5 0 V8 L0 4 Z" fill="#c4c4c4"/></svg>
<svg class="a" style="left:52px;top:644px" width="5" height="8"><path d="M0.5 0 V8 L5 4 Z" fill="#c4c4c4"/></svg>
<svg class="a" style="left:192px;top:640px" width="16" height="16" viewBox="0 0 16 16"><circle cx="8" cy="8" r="6.8" fill="none" stroke="#7a7a7a" stroke-width="1"/><path d="M8 4.5 V11.5 M4.5 8 H11.5" stroke="#6a6a6a" stroke-width="1.2"/></svg>
<svg class="a" style="left:766px;top:643px" width="4" height="11"><circle cx="2" cy="1.5" r="0.9" fill="#aaa"/><circle cx="2" cy="5" r="0.9" fill="#aaa"/><circle cx="2" cy="8.5" r="0.9" fill="#aaa"/></svg>
<div class="a" style="left:783px;top:642px;width:15px;height:14px;background:#fff;border:1px solid #c6c6c6"></div>
<svg class="a" style="left:788px;top:645px" width="5" height="8"><path d="M4.5 0 V8 L0 4 Z" fill="#555"/></svg>
<div class="a" style="left:797px;top:642px;width:223px;height:14px;background:#fff;border:1px solid #c6c6c6"></div>
<div class="a" style="left:1020px;top:643px;width:223px;height:12px;background:#dadada"></div>
<div class="a" style="left:1243px;top:642px;width:14px;height:14px;background:#fff;border:1px solid #c6c6c6"></div>
<svg class="a" style="left:1248px;top:645px" width="5" height="8"><path d="M0.5 0 V8 L5 4 Z" fill="#555"/></svg>
<!-- vertical scrollbar -->
<div class="a" style="left:1259px;top:190px;width:8px;height:445px;background:#e6e6e6;border-left:1px solid #d4d4d4"></div>
<div class="a" style="left:1263px;top:193px;width:6px;height:13px;background:#fff;border:1px solid #c6c6c6"></div>
<div class="a" style="left:1263px;top:205px;width:6px;height:16px;background:#fff;border:1px solid #c6c6c6"></div>
<div class="a" style="left:1263px;top:622px;width:6px;height:13px;background:#fff;border:1px solid #c6c6c6"></div>
</body></html>
